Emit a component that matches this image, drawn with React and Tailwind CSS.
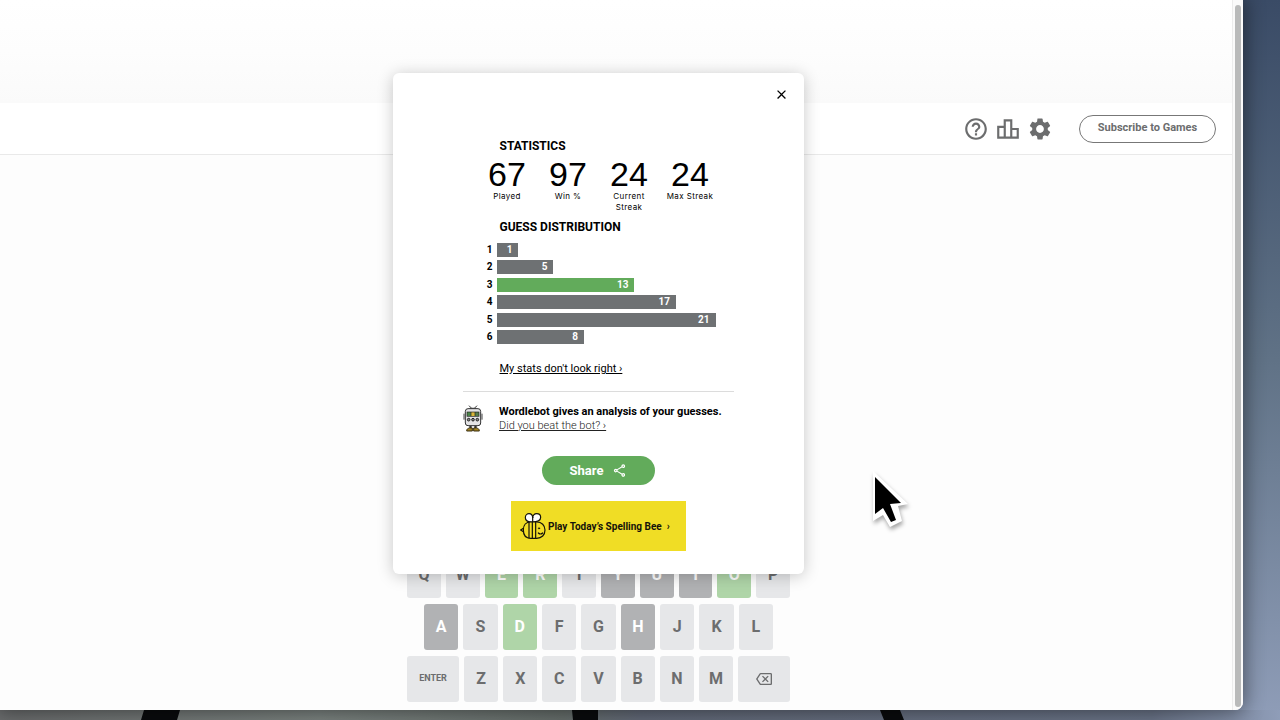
import React from "react";
import {
  MdClose,
  MdHelpOutline,
  MdOutlineBackspace,
  MdOutlineLeaderboard,
  MdOutlineShare,
  MdSettings,
} from "react-icons/md";

const stats = [
  ["67", "Played"],
  ["97", "Win %"],
  ["24", "Current Streak"],
  ["24", "Max Streak"],
];

const guesses = [
  { n: 1, count: 1, width: 10 },
  { n: 2, count: 5, width: 26 },
  { n: 3, count: 13, width: 63, current: true },
  { n: 4, count: 17, width: 82 },
  { n: 5, count: 21, width: 100 },
  { n: 6, count: 8, width: 40 },
];

const correct = "ERDO";
const absent = "YUIAH";

function Key({ letter }) {
  let tone = "bg-[#e6e7e9] text-[#6c6d6e]";
  if (correct.includes(letter)) tone = "bg-[#afd5a8] text-white";
  if (absent.includes(letter)) tone = "bg-[#b1b2b4] text-white";
  return (
    <button className={`h-[46px] flex-1 rounded-[3px] text-base font-bold ${tone}`}>{letter}</button>
  );
}

function Keyboard() {
  return (
    <div className="flex w-[383px] flex-col gap-1.5">
      <div className="flex gap-[5px]">
        {[..."QWERTYUIOP"].map((l) => <Key key={l} letter={l} />)}
      </div>
      <div className="flex gap-[5px] px-[17px]">
        {[..."ASDFGHJKL"].map((l) => <Key key={l} letter={l} />)}
      </div>
      <div className="flex gap-[5px]">
        <button className="h-[46px] w-[52px] rounded-[3px] bg-[#e6e7e9] text-[9px] font-bold text-[#6c6d6e]">ENTER</button>
        {[..."ZXCVBNM"].map((l) => <Key key={l} letter={l} />)}
        <button aria-label="Backspace" className="flex h-[46px] w-[52px] items-center justify-center rounded-[3px] bg-[#e6e7e9] text-[#6c6d6e]">
          <MdOutlineBackspace size={16} />
        </button>
      </div>
    </div>
  );
}

function BotIcon() {
  return (
    <svg width="20" height="27" viewBox="0 0 60 81" aria-hidden="true">
      <path d="M18 2 L26 10 M42 2 L34 10" stroke="#333" strokeWidth="3" fill="none" />
      <path d="M20 8h20v5h-20z" fill="#777" />
      <path d="M3 26v18M57 26v18" stroke="#444" strokeWidth="3" />
      <rect x="7" y="11" width="46" height="51" rx="8" fill="#e4e4e6" stroke="#333" strokeWidth="3" />
      <rect x="11" y="20" width="38" height="15" fill="#222" />
      <path d="M13 22h10v11h-10z" fill="#4b8449" />
      <path d="M25 22h10v11h-10z" fill="#d9b73b" />
      <path d="M37 22h10v11h-10z" fill="#557d4a" />
      <g fill="#888" stroke="#222" strokeWidth="3">
        <circle cx="17" cy="44" r="4" />
        <circle cx="30" cy="44" r="4" />
        <circle cx="43" cy="44" r="4" />
      </g>
      <path d="M19 62h7v7h-7zM34 62h7v7h-7z" fill="#333" />
      <path d="M11 78c0-7 5-10 17-9v9zM32 78v-9c12-1 17 2 17 9z" fill="#a48420" stroke="#392f12" strokeWidth="3" />
    </svg>
  );
}

function BeeIcon() {
  return (
    <svg width="26" height="26" viewBox="0 0 78 78" fill="none" stroke="#15130a" strokeWidth="3.6" strokeLinecap="round" aria-hidden="true">
      <path d="M37 27C25 27 16 23 16 14C16 6 22 2 27 2C34 2 38 8 38 15C38 8 43 2 50 2C57 2 62 7 62 13C62 23 52 27 37 27Z" fill="#fff" />
      <path d="M38 13V26" />
      <path d="M32 27H50C65 27 75 37 75 51C75 66 65 76 50 76H32C18 76 10 66 10 51C10 37 18 27 32 27Z" fill="#f3dd27" />
      <path d="M27 28V75M37 28V75M47 28V75" />
      <path d="M10 46L2 51L10 56" />
      <circle cx="57" cy="46" r="2" fill="#15130a" strokeWidth="2" />
      <path d="M55 60C59 64 64 64 68 60" />
    </svg>
  );
}

function StatsDialog() {
  return (
    <section
      role="dialog"
      aria-label="Statistics"
      className="relative flex w-[411px] flex-col items-center rounded-md bg-white pt-[66px] pb-[23px] text-black shadow-[0_2px_16px_rgba(0,0,0,0.22)]"
    >
      <button aria-label="Close" className="absolute top-[14px] right-[15px]">
        <MdClose size={15} />
      </button>
      <div className="flex w-[244px] flex-col">
        <h1 className="pl-[23px] text-[12px] leading-[14px] font-bold">STATISTICS</h1>
        <div className="mt-[4px] grid grid-cols-4 text-center">
          {stats.map(([value, label]) => (
            <div key={label} className="flex flex-col items-center">
              <div className="font-['Liberation_Sans',sans-serif] text-[34px] leading-[34px] font-normal">{value}</div>
              <div className="w-[58px] px-0.5 font-['Inter',sans-serif] text-[8px] leading-[11px] tracking-wider">{label}</div>
            </div>
          ))}
        </div>
        <h2 className="mt-[7px] pl-[23px] text-[12px] leading-[14px] font-bold">GUESS DISTRIBUTION</h2>
        <div className="mt-[9px] flex h-[101px] flex-col justify-between pr-[5px] text-[10px] leading-[14px] font-bold">
          {guesses.map((g) => (
            <div key={g.n} className="flex">
              <div className="w-5 pr-1 text-right">{g.n}</div>
              <div className="flex-1">
                <div
                  className={`h-[14px] pr-[6px] text-right text-white ${g.current ? "bg-[#62ab5b]" : "bg-[#6e7173]"}`}
                  style={{ width: `${g.width}%` }}
                >
                  {g.count}
                </div>
              </div>
            </div>
          ))}
        </div>
        <a href="#stats" className="mt-[18px] self-start pl-[23px] text-[11px] leading-[14px] underline underline-offset-1">My stats don't look right ›</a>
      </div>
      <div className="mt-[15px] flex w-[271px] items-start gap-4 border-t border-[#dcdcdc] pt-[13px]">
        <BotIcon />
        <div className="text-[11px] leading-[14px] whitespace-nowrap">
          <p className="font-bold">Wordlebot gives an analysis of your guesses.</p>
          <a href="#bot" className="font-light text-[#222] underline underline-offset-1">Did you beat the bot? ›</a>
        </div>
      </div>
      <button className="mt-[23px] flex h-[29px] w-[113px] items-center justify-center gap-[9px] rounded-full bg-[#62ab5b] text-[13px] font-bold text-white">
        Share
        <MdOutlineShare size={15} />
      </button>
      <a href="#bee" className="mt-4 flex h-[50px] w-[175px] items-center gap-0.5 bg-[#f0dd25] pl-[9px] text-[10px] font-bold whitespace-nowrap text-[#15130a]">
        <BeeIcon />
        Play Today’s Spelling Bee&nbsp; ›
      </a>
    </section>
  );
}

function Pointer() {
  return (
    <svg className="absolute top-[467px] left-[868px] drop-shadow-[1px_3px_2px_rgba(0,0,0,0.35)]" width="46" height="66" viewBox="0 0 46 66" aria-hidden="true">
      <path d="M5 4L40 37L30 39L34 54L22 60L15 48L5 54Z" fill="#fff" />
      <path d="M7 10L33 36L22 37L28 53L23 55L15 41L7 47Z" fill="#000" />
    </svg>
  );
}

export default function App() {
  return (
    <div className="relative flex h-screen flex-col overflow-hidden bg-linear-to-b from-[#3a4b66] via-[#607286] to-[#8f9db8] pr-[37px] font-['Roboto','Liberation_Sans',sans-serif]">
      <div className="relative flex min-h-0 flex-1 rounded-br-lg bg-[#fdfdfd] shadow-[0_0_20px_2px_rgba(0,0,0,0.45)]">
        <div className="relative flex min-w-0 flex-1 flex-col overflow-hidden">
          <div className="h-[103px] shrink-0 bg-linear-to-b from-white via-[#fdfdfd] to-[#fafafa]" />
          <header className="flex h-[52px] shrink-0 items-center justify-end gap-[26px] border-b border-[#e9e9e9] bg-white pr-4 text-[#6c6d6e]">
            <nav className="flex gap-1.5">
              <button aria-label="Help"><MdHelpOutline size={26} /></button>
              <button aria-label="Statistics"><MdOutlineLeaderboard size={26} /></button>
              <button aria-label="Settings"><MdSettings size={26} /></button>
            </nav>
            <button className="h-7 w-[137px] rounded-full border border-[#777] text-[11px] font-bold">Subscribe to Games</button>
          </header>
          <main className="flex flex-1 flex-col items-center justify-end pr-[35px] pb-2">
            <Keyboard />
          </main>
          <div className="absolute inset-x-0 top-[73px] flex justify-center pr-[35px]">
            <StatsDialog />
          </div>
        </div>
        <div className="flex w-[11px] justify-center rounded-br-lg border-l border-[#ececec] bg-[#fafafa] pt-[5px] pb-[3px]">
          <div className="w-1.5 rounded-full bg-[#b9baba]" />
        </div>
      </div>
      <div className="mr-[-37px] h-[10px] shrink-0">
        <svg className="h-full w-full" viewBox="0 0 1280 10" preserveAspectRatio="none" aria-hidden="true">
          <defs>
            <linearGradient id="ground">
              <stop offset="0" stopColor="#6a6c6d" />
              <stop offset="0.25" stopColor="#7b8380" />
              <stop offset="0.44" stopColor="#666e6b" />
              <stop offset="0.5" stopColor="#626978" />
              <stop offset="0.9" stopColor="#6a7488" />
              <stop offset="1" stopColor="#8f9db8" />
            </linearGradient>
          </defs>
          <path d="M0 0H1280V10H0Z" fill="url(#ground)" />
          <path d="M144 0H180L177 10H141ZM572 0H598V10H573ZM880 0H900L904 10H884Z" fill="#0a0b0d" />
        </svg>
      </div>
      <Pointer />
    </div>
  );
}
